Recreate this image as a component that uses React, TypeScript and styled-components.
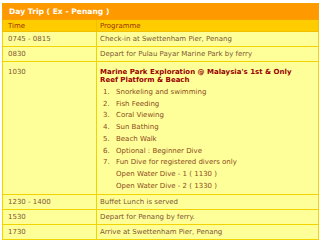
import styled, { createGlobalStyle } from 'styled-components';

const GlobalStyle = createGlobalStyle`
  body {
    margin: 0;
    background: #ffffff;
  }
`;

const Page = styled.div`
  padding: 3px 2px 0 2px;
  font-family: 'DejaVu Sans', Verdana, sans-serif;
`;

const Table = styled.table`
  width: 316px;
  border-collapse: collapse;
  border: 1px solid #f2cf00;
  table-layout: fixed;
`;

const Col = styled.col<{ $w: number }>`
  width: ${p => p.$w}px;
`;

const TitleCell = styled.th`
  background: #ff9900;
  color: #ffffff;
  font-size: 7.6px;
  font-weight: bold;
  text-align: left;
  height: 15px;
  padding: 0 0 0 6px;
  border: 1px solid #f7a000;
`;

const HeadCell = styled.th<{ $first?: boolean }>`
  background: #ffcc00;
  color: #993300;
  font-size: 7px;
  font-weight: normal;
  text-align: left;
  height: 11px;
  padding: 0 0 0 ${p => (p.$first ? '5px' : '3px')};
  border: 1px solid #f0c000;
`;

const Cell = styled.td<{ $first?: boolean; $tall?: boolean }>`
  background: #ffff99;
  color: #7d5634;
  font-size: 7px;
  line-height: 11px;
  vertical-align: top;
  padding: ${p => (p.$tall ? '5px' : '2px')} 3px ${p => (p.$tall ? '2px' : '1px')} ${p => (p.$first ? '5px' : '3px')};
  border: 1px solid #f0d400;
  white-space: nowrap;
`;

const Highlight = styled.div`
  color: #990000;
  font-weight: bold;
  line-height: 8px;
  padding-top: 1px;
`;

const Steps = styled.ol`
  margin: 3px 0 0 0;
  padding: 0 0 0 3px;
  list-style: none;
  counter-reset: step;
  line-height: 11.7px;
  color: #8a4a20;
`;

const Step = styled.li`
  counter-increment: step;
  padding-left: 13px;
  text-indent: -13px;

  &::before {
    content: counter(step) '.';
    display: inline-block;
    width: 13px;
    text-indent: 0;
  }
`;

const schedule = [
  { time: '0745 - 0815', text: 'Check-in at Swettenham Pier, Penang' },
  { time: '0830', text: 'Depart for Pulau Payar Marine Park by ferry' },
];

const after = [
  { time: '1230 - 1400', text: 'Buffet Lunch is served' },
  { time: '1530', text: 'Depart for Penang by ferry.' },
  { time: '1730', text: 'Arrive at Swettenham Pier, Penang' },
];

export default function App() {
  return (
    <Page>
      <GlobalStyle />
      <Table>
        <colgroup>
          <Col $w={94} />
          <Col $w={222} />
        </colgroup>
        <thead>
          <tr>
            <TitleCell colSpan={2}>Day Trip ( Ex - Penang )</TitleCell>
          </tr>
          <tr>
            <HeadCell $first>Time</HeadCell>
            <HeadCell>Programme</HeadCell>
          </tr>
        </thead>
        <tbody>
          {schedule.map(row => (
            <tr key={row.time}>
              <Cell $first>{row.time}</Cell>
              <Cell>{row.text}</Cell>
            </tr>
          ))}
          <tr>
            <Cell $first $tall>1030</Cell>
            <Cell $tall>
              <Highlight>
                Marine Park Exploration @ Malaysia's 1st &amp; Only
                <br />
                Reef Platform &amp; Beach
              </Highlight>
              <Steps>
                <Step>Snorkeling and swimming</Step>
                <Step>Fish Feeding</Step>
                <Step>Coral Viewing</Step>
                <Step>Sun Bathing</Step>
                <Step>Beach Walk</Step>
                <Step>Optional : Beginner Dive</Step>
                <Step>
                  Fun Dive for registered divers only
                  <br />
                  Open Water Dive - 1 ( 1130 )
                  <br />
                  Open Water Dive - 2 ( 1330 )
                </Step>
              </Steps>
            </Cell>
          </tr>
          {after.map(row => (
            <tr key={row.time}>
              <Cell $first>{row.time}</Cell>
              <Cell>{row.text}</Cell>
            </tr>
          ))}
        </tbody>
      </Table>
    </Page>
  );
}
